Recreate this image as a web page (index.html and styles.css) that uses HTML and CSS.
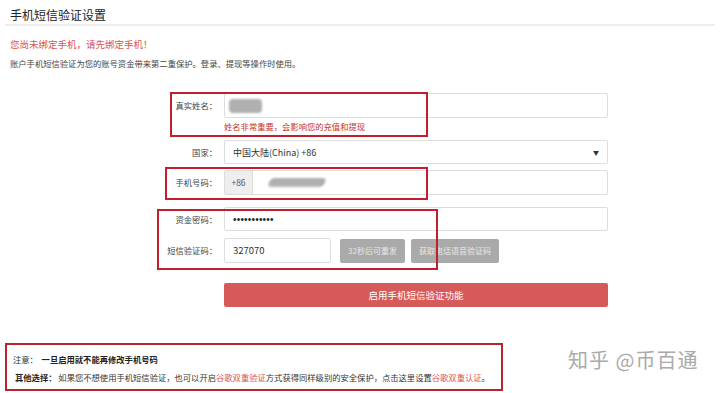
FILE: index.html
```html
<!DOCTYPE html>
<html lang="zh-CN">
<head>
    <meta charset="UTF-8">
    <meta name="viewport" content="width=device-width, initial-scale=1.0">
    <title>手机短信验证设置</title>
    <link rel="stylesheet" href="styles.css">
</head>
<body>
    <div class="page">
        <h2 class="title">手机短信验证设置</h2>
        <p class="warn">您尚未绑定手机，请先绑定手机！</p>
        <p class="desc">账户手机短信验证为您的账号资金带来第二重保护。登录、提现等操作时使用。</p>

        <form class="smsForm">
            <div class="row row-name">
                <label>真实姓名：</label>
                <div class="field">
                    <div class="input"><span class="blur blur-name"></span></div>
                    <p class="hint">姓名非常重要，会影响您的充值和提现</p>
                </div>
            </div>
            <div class="row row-country">
                <label>国家：</label>
                <div class="field">
                    <div class="input select">中国大陆(China) +86<span class="arrow">&#9660;</span></div>
                </div>
            </div>
            <div class="row row-phone">
                <label>手机号码：</label>
                <div class="field">
                    <div class="input group">
                        <span class="addon">+86</span>
                        <span class="blur blur-phone"></span>
                    </div>
                </div>
            </div>
            <div class="row row-pass">
                <label>资金密码：</label>
                <div class="field">
                    <div class="input dots">&bull;&bull;&bull;&bull;&bull;&bull;&bull;&bull;&bull;&bull;&bull;</div>
                </div>
            </div>
            <div class="row row-code">
                <label>短信验证码：</label>
                <div class="field inline">
                    <div class="input code">327070</div>
                    <button type="button" class="grayBtn resend">32秒后可重发</button>
                    <button type="button" class="grayBtn voice">获取电话语音验证码</button>
                </div>
            </div>
            <div class="row row-submit">
                <label></label>
                <div class="field">
                    <button type="button" class="submitBtn">启用手机短信验证功能</button>
                </div>
            </div>
        </form>

        <div class="bottom">
            <div class="notice">
                <p>注意：&nbsp; <b>一旦启用就不能再修改手机号码</b></p>
                <p><b>其他选择：</b> 如果您不想使用手机短信验证，也可以开启<a>谷歌双重验证</a>方式获得同样级别的安全保护，点击这里设置<a>谷歌双重认证</a>。</p>
            </div>
            <div class="mark">知乎 @币百通</div>
        </div>

        <!-- annotation boxes -->
        <div class="anno anno1"></div>
        <div class="anno anno2"></div>
        <div class="anno anno3"></div>
    </div>
</body>
</html>
```

FILE: styles.css
```css
body{
    margin: 0;
    background-color: #fff;
    font-family: "Noto Sans CJK SC", "Liberation Sans", sans-serif;
    color: #333;
}
.page{
    position: relative;
    width: 720px;
    height: 393px;
    overflow: hidden;
}
.title{
    margin: 0 5px;
    padding: 6px 5px 0;
    height: 18px;
    font-size: 12px;
    font-weight: 400;
    line-height: 18px;
    color: #222;
    border-bottom: 2px solid #eee;
}
.warn{
    margin: 11px 10px 0;
    font-size: 9.5px;
    line-height: 14px;
    color: #d9534f;
}
.desc{
    margin: 6px 10px 0;
    font-size: 8.3px;
    line-height: 12px;
    color: #444;
}
/* ___________ form ___________ */
.smsForm{
    margin-top: 24px;
}
.row{
    display: flex;
    align-items: flex-start;
}
.row label{
    width: 217px;
    flex: none;
    text-align: right;
    font-size: 8.3px;
    line-height: 25px;
    color: #444;
    margin-right: 7px;
}
.field{
    width: 384px;
}
.field.inline{
    display: flex;
    align-items: center;
}
.input{
    box-sizing: border-box;
    height: 25px;
    border: 1px solid #ddd;
    border-radius: 2px;
    background-color: #fff;
    padding: 0 8px;
    font-size: 9px;
    line-height: 23px;
    color: #333;
    display: flex;
    align-items: center;
}
.hint{
    margin: 0;
    font-size: 8.3px;
    line-height: 16px;
    color: #c9302c;
}
.row-name{ margin-bottom: 6px; }
.row-country{ margin-bottom: 5px; }
.row-country .input{ height: 24px; }
.row-phone{ margin-bottom: 12px; }
.row-pass{ margin-bottom: 6px; }
.row-pass .input{ height: 24px; }
.dots{
    font-family: "Liberation Sans", sans-serif;
    font-size: 10px;
    letter-spacing: 0.2px;
    color: #222;
}
.row-code{ margin-bottom: 17px; }
.select{
    justify-content: space-between;
}
.arrow{
    font-size: 6px;
    color: #333;
}
.group{
    padding: 0;
}
.addon{
    width: 27px;
    height: 23px;
    background-color: #eee;
    border-right: 1px solid #ddd;
    text-align: center;
    font-size: 8.5px;
    color: #555;
}
.blur{
    display: block;
    background-color: #b0b0b0;
    filter: blur(1.2px);
}
.blur-name{
    width: 33px;
    height: 14px;
    border-radius: 4px;
    margin-left: -4px;
}
.blur-phone{
    width: 56px;
    height: 9px;
    border-radius: 4px;
    margin-left: 16px;
    transform: skewX(-20deg);
}
.code{
    width: 107px;
    font-size: 9.5px;
}
.grayBtn{
    border: none;
    border-radius: 2px;
    background-color: #aaa;
    color: #e8e8e8;
    font-family: inherit;
    font-size: 8px;
    height: 24px;
    padding: 0;
}
.resend{
    width: 65px;
    margin-left: 9px;
}
.voice{
    width: 88px;
    margin-left: 6px;
}
.submitBtn{
    width: 384px;
    height: 24px;
    border: none;
    border-radius: 2px;
    background-color: #d75a5a;
    color: #fff;
    font-family: inherit;
    font-size: 9.5px;
}
/* ___________ bottom ___________ */
.bottom{
    display: flex;
    align-items: flex-start;
    margin-top: 36px;
    padding-left: 5px;
}
.notice{
    box-sizing: border-box;
    width: 498px;
    height: 48px;
    border: 2px solid #b6262e;
    padding: 8px 0 0 6px;
}
.notice p{
    margin: 0 0 6px;
    font-size: 8.3px;
    line-height: 12px;
    color: #333;
}
.notice p:last-child{
    padding-left: 2px;
}
.notice b{
    font-weight: 700;
    color: #222;
}
.notice a{
    color: #d9534f;
}
.mark{
    margin: 2px 0 0 65px;
    font-size: 20px;
    color: #aaa;
    letter-spacing: 1px;
}
.anno{
    position: absolute;
    border: 2px solid #c31e2c;
    box-sizing: border-box;
}
.anno1{ left: 170px; top: 92px; width: 258px; height: 45px; }
.anno2{ left: 165px; top: 167px; width: 263px; height: 33px; }
.anno3{ left: 157px; top: 209px; width: 281px; height: 61px; }
```
